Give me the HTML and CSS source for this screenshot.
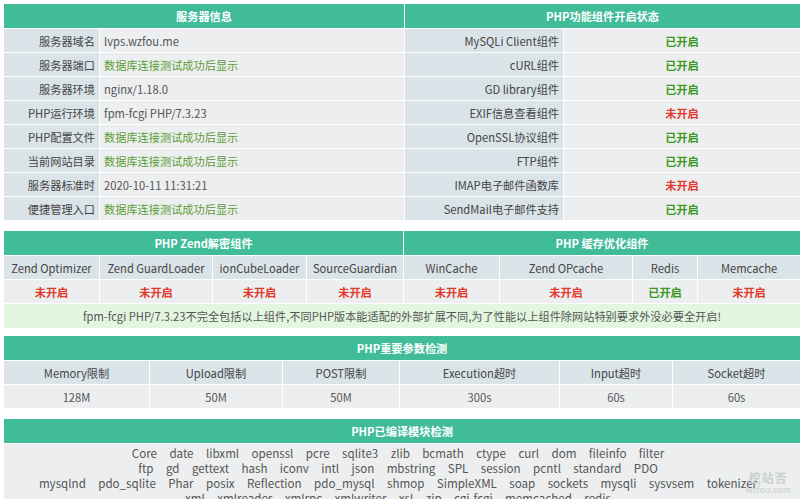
FILE: index.html
```html
<!DOCTYPE html>
<html lang="zh-CN">
<head>
  <meta charset="UTF-8">
  <title>PHP探针</title>
  <link rel="stylesheet" href="styles.css">
</head>
<body>
  <div class="wrap">
    <table class="box info">
      <colgroup>
        <col style="width:95px"><col style="width:304px"><col style="width:158px"><col>
      </colgroup>
      <tr><th colspan="2">服务器信息</th><th colspan="2">PHP功能组件开启状态</th></tr>
      <tr><td class="lbl">服务器域名</td><td class="val">lvps.wzfou.me</td><td class="lbl">MySQLi Client组件</td><td class="st on">已开启</td></tr>
      <tr><td class="lbl">服务器端口</td><td class="val tip">数据库连接测试成功后显示</td><td class="lbl">cURL组件</td><td class="st on">已开启</td></tr>
      <tr><td class="lbl">服务器环境</td><td class="val">nginx/1.18.0</td><td class="lbl">GD library组件</td><td class="st on">已开启</td></tr>
      <tr><td class="lbl">PHP运行环境</td><td class="val">fpm-fcgi PHP/7.3.23</td><td class="lbl">EXIF信息查看组件</td><td class="st off">未开启</td></tr>
      <tr><td class="lbl">PHP配置文件</td><td class="val tip">数据库连接测试成功后显示</td><td class="lbl">OpenSSL协议组件</td><td class="st on">已开启</td></tr>
      <tr><td class="lbl">当前网站目录</td><td class="val tip">数据库连接测试成功后显示</td><td class="lbl">FTP组件</td><td class="st on">已开启</td></tr>
      <tr><td class="lbl">服务器标准时</td><td class="val">2020-10-11 11:31:21</td><td class="lbl">IMAP电子邮件函数库</td><td class="st off">未开启</td></tr>
      <tr><td class="lbl">便捷管理入口</td><td class="val tip">数据库连接测试成功后显示</td><td class="lbl">SendMail电子邮件支持</td><td class="st on">已开启</td></tr>
    </table>

    <table class="box grid zend">
      <colgroup>
        <col style="width:95px"><col style="width:112px"><col style="width:93px"><col style="width:96px">
        <col style="width:95px"><col style="width:132px"><col style="width:64px"><col>
      </colgroup>
      <tr><th colspan="4">PHP Zend解密组件</th><th colspan="4">PHP 缓存优化组件</th></tr>
      <tr class="names">
        <td>Zend Optimizer</td><td>Zend GuardLoader</td><td>ionCubeLoader</td><td>SourceGuardian</td>
        <td>WinCache</td><td>Zend OPcache</td><td>Redis</td><td>Memcache</td>
      </tr>
      <tr class="vals">
        <td class="off">未开启</td><td class="off">未开启</td><td class="off">未开启</td><td class="off">未开启</td>
        <td class="off">未开启</td><td class="off">未开启</td><td class="on">已开启</td><td class="off">未开启</td>
      </tr>
      <tr><td colspan="8" class="note">fpm-fcgi PHP/7.3.23不完全包括以上组件,不同PHP版本能适配的外部扩展不同,为了性能以上组件除网站特别要求外没必要全开启!</td></tr>
    </table>

    <table class="box grid">
      <colgroup>
        <col style="width:145px"><col style="width:132px"><col style="width:116px">
        <col style="width:159px"><col style="width:112px"><col>
      </colgroup>
      <tr><th colspan="6">PHP重要参数检测</th></tr>
      <tr class="names"><td>Memory限制</td><td>Upload限制</td><td>POST限制</td><td>Execution超时</td><td>Input超时</td><td>Socket超时</td></tr>
      <tr class="vals plain"><td>128M</td><td>50M</td><td>50M</td><td>300s</td><td>60s</td><td>60s</td></tr>
    </table>

    <table class="box">
      <tr><th>PHP已编译模块检测</th></tr>
      <tr>
        <td class="mods">
          <div class="line"><span>Core</span><span>date</span><span>libxml</span><span>openssl</span><span>pcre</span><span>sqlite3</span><span>zlib</span><span>bcmath</span><span>ctype</span><span>curl</span><span>dom</span><span>fileinfo</span><span>filter</span></div>
          <div class="line"><span>ftp</span><span>gd</span><span>gettext</span><span>hash</span><span>iconv</span><span>intl</span><span>json</span><span>mbstring</span><span>SPL</span><span>session</span><span>pcntl</span><span>standard</span><span>PDO</span></div>
          <div class="line"><span>mysqlnd</span><span>pdo_sqlite</span><span>Phar</span><span>posix</span><span>Reflection</span><span>pdo_mysql</span><span>shmop</span><span>SimpleXML</span><span>soap</span><span>sockets</span><span>mysqli</span><span>sysvsem</span><span>tokenizer</span></div>
          <div class="line"><span>xml</span><span>xmlreader</span><span>xmlrpc</span><span>xmlwriter</span><span>xsl</span><span>zip</span><span>cgi-fcgi</span><span>memcached</span><span>redis</span></div>
        </td>
      </tr>
    </table>
  </div>

  <div class="mark">
    <div class="mark-cn">挖站否</div>
    <div class="mark-en">wzfou.com</div>
  </div>
</body>
</html>
```

FILE: styles.css
```css
body {
  margin: 0;
  background: #fff;
  font-family: "Microsoft YaHei", "Noto Sans CJK SC", "Noto Sans", sans-serif;
  font-size: 11.2px;
  color: #444;
  overflow: hidden;
}
.wrap {
  padding: 3px 0 0 3px;
  width: 798px;
}
.box {
  width: 798px;
  border-collapse: separate;
  border-spacing: 1px;
  table-layout: fixed;
  margin-bottom: 9px;
}
.zend {
  margin-bottom: 6px;
}
.box th {
  background: #40bc98;
  color: #fff;
  font-weight: bold;
  height: 24px;
  padding: 0;
  text-align: center;
}
.box td {
  height: 23px;
  padding: 0 4px;
  white-space: nowrap;
  overflow: hidden;
}
.info .lbl {
  background: #dae3e8;
  text-align: right;
  color: #444;
}
.info .val {
  background: #eceeef;
  color: #555;
}
.info .st {
  background: #eceeef;
  text-align: center;
}
.on {
  color: #3a9a1f;
  font-weight: bold;
}
.off {
  color: #e2392d;
  font-weight: bold;
}
.tip {
  color: #5d9d38 !important;
}
.grid td {
  text-align: center;
  padding: 0;
}
.grid .names td {
  background: #dae3e8;
  color: #444;
}
.grid .vals td {
  background: #eceeef;
}
.grid .plain td {
  color: #555;
}
.grid .note {
  background: #e3f7e0;
  color: #555;
  height: 24px;
}
.mods {
  background: #eceeef;
  color: #555;
  text-align: center;
  line-height: 15px;
  font-size: 11.6px;
  padding: 2px 8px 3px 0 !important;
}
.line {
  display: flex;
  justify-content: center;
  gap: 12.4px;
}
.mark {
  position: absolute;
  right: 9px;
  bottom: 4px;
  text-align: center;
  color: #cbcece;
}
.mark-cn {
  font-size: 12px;
  font-weight: bold;
  letter-spacing: 1px;
  line-height: 14px;
}
.mark-en {
  font-size: 9px;
  line-height: 10px;
}
```
